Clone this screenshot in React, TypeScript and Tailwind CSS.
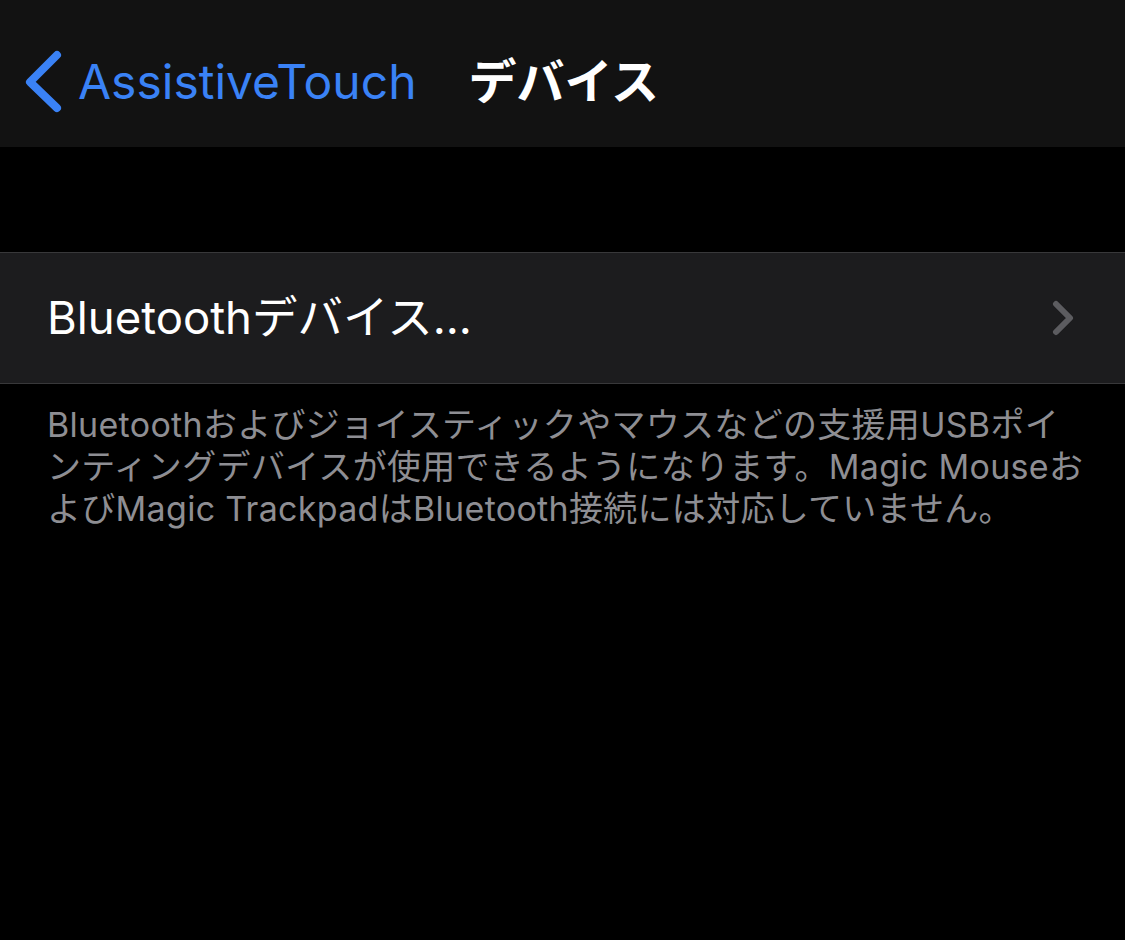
const font = { fontFamily: 'Inter, "Noto Sans CJK JP", sans-serif' };

function BackChevron() {
  return (
    <svg width="40" height="64" viewBox="0 0 40 64" className="shrink-0">
      <polyline
        points="32,5 5,32 32,58"
        fill="none"
        stroke="#3a82f6"
        strokeWidth="8"
        strokeLinecap="round"
        strokeLinejoin="round"
      />
    </svg>
  );
}

function RowChevron() {
  return (
    <svg width="24" height="36" viewBox="0 0 24 36" className="shrink-0">
      <polyline
        points="5,4 19,18 5,32"
        fill="none"
        stroke="#5c5c60"
        strokeWidth="6"
        strokeLinecap="round"
        strokeLinejoin="round"
      />
    </svg>
  );
}

export default function App() {
  return (
    <div className="min-h-[940px] w-full bg-black" style={font}>
      {/* Nav bar */}
      <header className="flex h-[147px] items-center bg-[#121212] pt-[16px]">
        <div className="flex items-center pl-[25px]">
          <BackChevron />
          <span className="ml-[13px] text-[48px] leading-none text-[#3a82f6]">AssistiveTouch</span>
        </div>
        <h1 className="ml-[52px] text-[48px] font-bold leading-none text-white">デバイス</h1>
      </header>

      <div className="h-[105px]" />

      {/* Row */}
      <div className="flex h-[132px] items-center justify-between border-y border-[#38383a] bg-[#1c1c1e] pl-[47px] pr-[50px]">
        <span className="text-[45.5px] leading-none text-white">Bluetoothデバイス...</span>
        <RowChevron />
      </div>

      {/* Footer */}
      <p className="whitespace-nowrap px-[47px] pt-[20px] text-[34px] leading-[42px] tracking-[0.3px] text-[#8e8e93]">
        Bluetoothおよびジョイスティックやマウスなどの支援用USBポイ
        <br />
        ンティングデバイスが使用できるようになります。Magic Mouseお
        <br />
        よびMagic TrackpadはBluetooth接続には対応していません。
      </p>
    </div>
  );
}
